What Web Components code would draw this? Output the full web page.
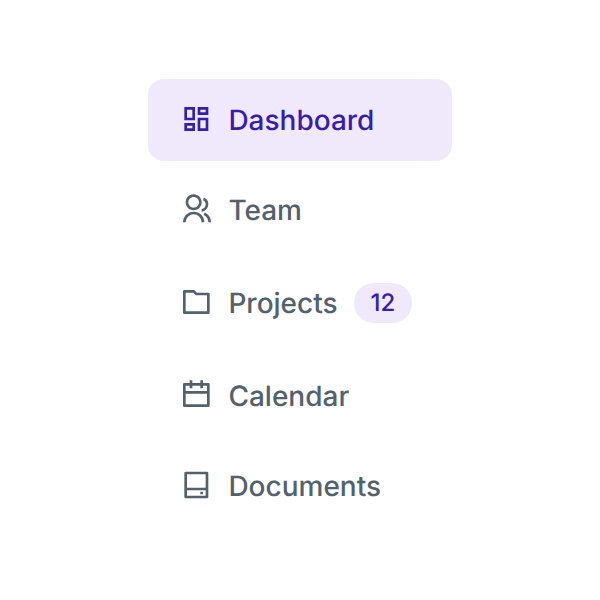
<!DOCTYPE html>
<html lang="en">
<head>
<meta charset="utf-8">
<title>Navigation</title>
<style>
body { margin: 0; background: #fff; font-family: Inter, "Liberation Sans", sans-serif; text-rendering: geometricPrecision; }
</style>
</head>
<body>
<side-nav>
  <nav-item icon="dashboard" active>Dashboard</nav-item>
  <nav-item icon="team">Team</nav-item>
  <nav-item icon="folder">Projects<count-badge slot="badge">12</count-badge></nav-item>
  <nav-item icon="calendar">Calendar</nav-item>
  <nav-item icon="drive">Documents</nav-item>
</side-nav>
<script>
const ICONS = {
  dashboard: 'M13 21V11h8v10h-8zM3 13V3h8v10H3zm6-2V5H5v6h4zM3 21v-6h8v6H3zm2-2h4v-2H5v2zm10 0h4v-6h-4v6zM13 3h8v6h-8V3zm2 2v2h4V5h-4z',
  team: 'M2 22a8 8 0 1 1 16 0h-2a6 6 0 1 0-12 0H2zm8-9c-3.315 0-6-2.685-6-6s2.685-6 6-6 6 2.685 6 6-2.685 6-6 6zm0-2c2.21 0 4-1.79 4-4s-1.79-4-4-4-4 1.79-4 4 1.79 4 4 4zm8.284 3.703A8.002 8.002 0 0 1 23 22h-2a6.001 6.001 0 0 0-3.537-5.473l.82-1.824zm-.596-11.29A5.501 5.501 0 0 1 21 8.5a5.499 5.499 0 0 1-5 5.478v-2.013a3.5 3.5 0 0 0 1.041-6.609l.647-1.943z',
  folder: 'M12.414 5H21a1 1 0 0 1 1 1v14a1 1 0 0 1-1 1H3a1 1 0 0 1-1-1V4a1 1 0 0 1 1-1h7.414l2 2zM4 5v14h16V7h-8.414l-2-2H4z',
  calendar: 'M17 3h4a1 1 0 0 1 1 1v16a1 1 0 0 1-1 1H3a1 1 0 0 1-1-1V4a1 1 0 0 1 1-1h4V1h2v2h6V1h2v2zm-2 2H9v2H7V5H4v4h16V5h-3v2h-2V5zm5 6H4v8h16v-8z',
  drive: 'M5 14h14V4H5v10zm0 2v4h14v-4H5zM4 2h16a1 1 0 0 1 1 1v18a1 1 0 0 1-1 1H4a1 1 0 0 1-1-1V3a1 1 0 0 1 1-1zm11 15h2v2h-2v-2z'
};

customElements.define('side-nav', class extends HTMLElement {
  constructor() {
    super();
    this.attachShadow({ mode: 'open' }).innerHTML = `
      <style>
        :host { display: block; width: 304px; margin: 0 auto; padding-top: 79px; }
        nav { display: flex; flex-direction: column; gap: 8px; }
      </style>
      <nav><slot></slot></nav>`;
  }
});

customElements.define('nav-icon', class extends HTMLElement {
  connectedCallback() {
    const root = this.shadowRoot || this.attachShadow({ mode: 'open' });
    root.innerHTML = `
      <style>
        :host { display: block; width: 32px; height: 32px; flex: none; }
        svg { display: block; width: 100%; height: 100%; fill: currentColor; }
      </style>
      <svg viewBox="-0.25 0 24 24" aria-hidden="true"><path d="${ICONS[this.getAttribute('name')]}"/></svg>`;
  }
});

customElements.define('count-badge', class extends HTMLElement {
  constructor() {
    super();
    this.attachShadow({ mode: 'open' }).innerHTML = `
      <style>
        :host {
          display: flex; align-items: center; justify-content: center; box-sizing: border-box;
          width: 58px; height: 40px; border-radius: 20px;
          background: #f0e9fc; color: #361cb0;
          font-size: 24px; line-height: 40px; font-weight: 500; letter-spacing: 0.2px;
        }
      </style>
      <slot></slot>`;
  }
});

customElements.define('nav-item', class extends HTMLElement {
  connectedCallback() {
    const root = this.shadowRoot || this.attachShadow({ mode: 'open' });
    root.innerHTML = `
      <style>
        :host {
          display: flex; align-items: center; box-sizing: border-box;
          padding: 24px 32px; border-radius: 16px; color: #52616b;
          font-size: 28px; line-height: 34px; font-weight: 500; cursor: pointer;
        }
        :host([active]) { background: #f0e9fc; color: #361cb0; }
        nav-icon { margin: 0 16.4px 2px 0; }
        slot[name=badge]::slotted(*) { margin-left: 16.4px; }
      </style>
      <nav-icon name="${this.getAttribute('icon')}"></nav-icon>
      <span><slot></slot></span>
      <slot name="badge"></slot>`;
  }
});
</script>
</body>
</html>
